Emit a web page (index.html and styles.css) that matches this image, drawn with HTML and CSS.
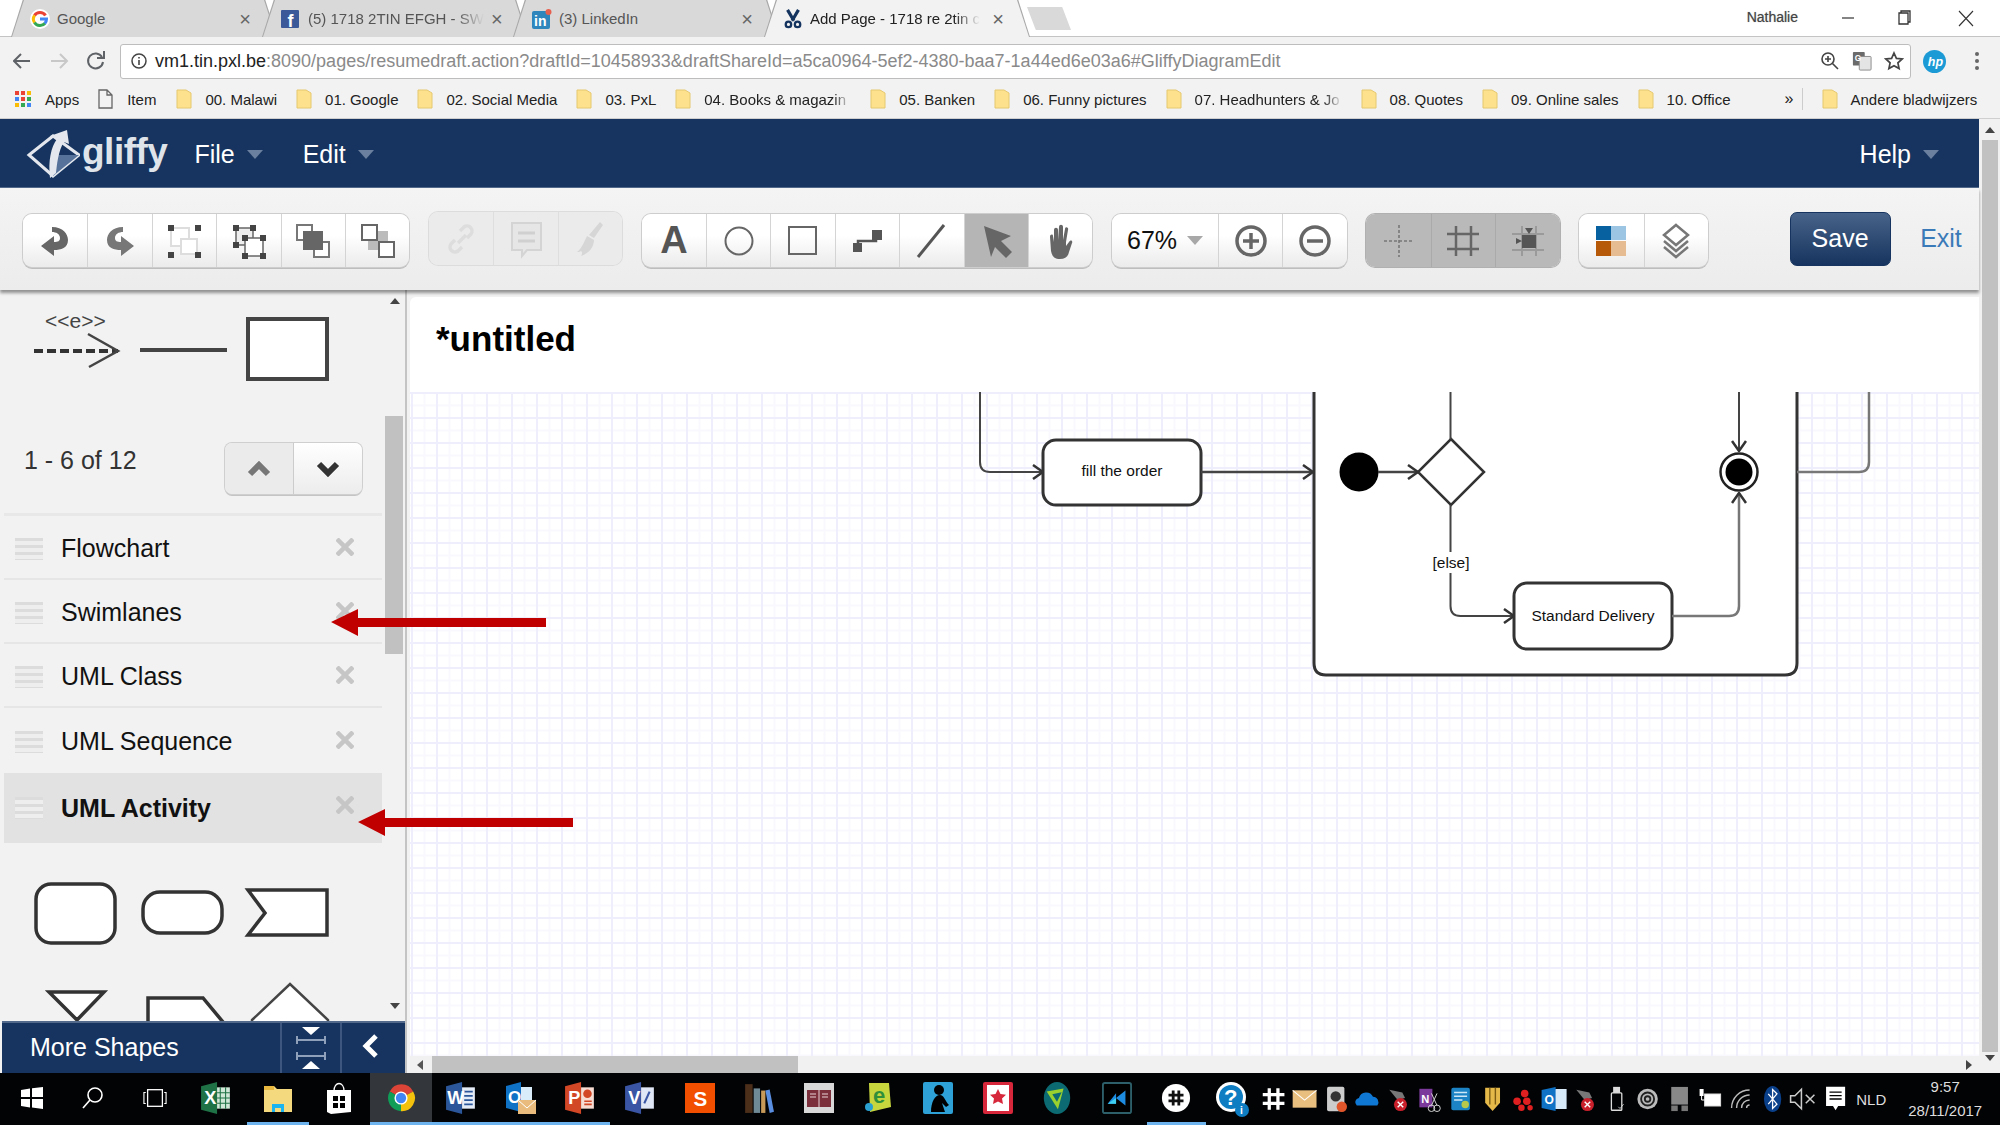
FILE: index.html
```html
<!DOCTYPE html>
<html lang="en">
<head>
<meta charset="utf-8">
<title>Add Page - 1718 re 2tin</title>
<link rel="stylesheet" href="styles.css">
</head>
<body>
<div class="tabstrip">
  <div class="tab">
    <svg class="fav" viewBox="0 0 20 20"><circle cx="10" cy="10" r="10" fill="#fff"/><path d="M15.5 6.5A6.5 6.5 0 0 0 4.5 6.5" fill="none" stroke="#ea4335" stroke-width="3"/><path d="M4.6 6.3A6.500 6.500 0 0 0 4.6 13.700" fill="none" stroke="#fbbc05" stroke-width="3"/><path d="M4.500 13.500A6.500 6.500 0 0 0 15 14.200" fill="none" stroke="#34a853" stroke-width="3"/><path d="M10 10h6.500A6.500 6.500 0 0 1 14.800 14.500" fill="none" stroke="#4285f4" stroke-width="3"/></svg>
    <span class="tab-title">Google</span><span class="tab-x">×</span>
  </div>
  <div class="tab">
    <svg class="fav" viewBox="0 0 20 20"><rect y="1" width="18" height="18" rx="1" fill="#3b5998"/><text x="6.500" y="18" class="fav-f">f</text></svg>
    <span class="tab-title fade">(5) 1718 2TIN EFGH - SW</span><span class="tab-x">×</span>
  </div>
  <div class="tab">
    <svg class="fav" viewBox="0 0 20 20"><rect y="2" width="18" height="18" rx="2" fill="#2f86bd"/><text x="2" y="17" class="fav-in">in</text><circle cx="16.500" cy="3" r="3" fill="#e6604f"/></svg>
    <span class="tab-title">(3) LinkedIn</span><span class="tab-x">×</span>
  </div>
  <div class="tab active">
    <svg class="fav" viewBox="0 0 22 22"><path d="M5 1l7 12M17 1L10 13" stroke="#14335f" stroke-width="3.500" fill="none"/><circle cx="6" cy="17" r="3" fill="none" stroke="#14335f" stroke-width="2.500"/><circle cx="16" cy="17" r="3" fill="none" stroke="#14335f" stroke-width="2.500"/></svg>
    <span class="tab-title fade">Add Page - 1718 re 2tin c</span><span class="tab-x">×</span>
  </div>
  <div class="newtab"></div>
  <span class="user">Nathalie</span>
  <svg class="winctl" viewBox="0 0 150 36"><path d="M0 18h12" stroke="#333" stroke-width="1.200"/><path d="M57 13h9v11h-9zM59 13v-2h9v11h-2" fill="none" stroke="#333" stroke-width="1.300"/><path d="M117 11l14 15M131 11l-14 15" stroke="#333" stroke-width="1.100"/></svg>
</div>

<div class="addressrow">
  <svg class="navbtns" viewBox="0 0 96 28"><path d="M17 14H2M8 7l-7 7 7 7" fill="none" stroke="#5f6368" stroke-width="2"/><path d="M38 14h15M47 7l7 7-7 7" fill="none" stroke="#c8c8c8" stroke-width="2"/><path d="M89 10a7.500 7.500 0 1 0 1 5M91 4v7h-7" fill="none" stroke="#5f6368" stroke-width="2"/></svg>
  <div class="omnibox">
    <svg class="info" viewBox="0 0 18 18"><circle cx="9" cy="9" r="7" fill="none" stroke="#444" stroke-width="1.500"/><path d="M9 8v5M9 5v1.500" stroke="#444" stroke-width="1.600"/></svg>
    <span class="url"><b>vm1.tin.pxl.be</b>:8090/pages/resumedraft.action?draftId=10458933&amp;draftShareId=a5ca0964-5ef2-4380-baa7-1a44ed6e03a6#GliffyDiagramEdit</span>
    <svg class="omni-ic" viewBox="0 0 20 20"><circle cx="8" cy="8" r="6" fill="none" stroke="#444" stroke-width="1.600"/><path d="M12.500 12.500L18 18M8 5v6M5 8h6" stroke="#444" stroke-width="1.600"/></svg>
    <svg class="omni-ic" viewBox="0 0 22 22"><rect x="1" y="1" width="13" height="15" rx="1" fill="#6b6b6b"/><rect x="8" y="6" width="13" height="15" rx="1" fill="#e4e4e4" stroke="#888"/><text x="3" y="11" class="fav-g">G</text></svg>
    <svg class="omni-ic" viewBox="0 0 20 20"><path d="M10 2l2.400 5.400 5.800.6-4.300 3.900 1.200 5.700L10 14.700l-5.100 2.900 1.200-5.700L1.800 8l5.800-.6z" fill="none" stroke="#444" stroke-width="1.700"/></svg>
  </div>
  <svg class="hp" viewBox="0 0 24 24"><circle cx="12" cy="12" r="12" fill="#1b9ad6"/><text x="5" y="17" class="hp-t">hp</text></svg>
  <svg class="dots" viewBox="0 0 4 18"><circle cx="2" cy="2" r="2" fill="#666"/><circle cx="2" cy="9" r="2" fill="#666"/><circle cx="2" cy="16" r="2" fill="#666"/></svg>
</div>

<div class="bookmarks">
  <svg class="apps" viewBox="0 0 17 17"><g><rect width="4" height="4" fill="#ea4335"/><rect x="6" width="4" height="4" fill="#ea4335"/><rect x="12" width="4" height="4" fill="#fbbc05"/><rect y="6" width="4" height="4" fill="#4285f4"/><rect x="6" y="6" width="4" height="4" fill="#ea4335"/><rect x="12" y="6" width="4" height="4" fill="#34a853"/><rect y="12" width="4" height="4" fill="#fbbc05"/><rect x="6" y="12" width="4" height="4" fill="#34a853"/><rect x="12" y="12" width="4" height="4" fill="#4285f4"/></g></svg>
  <span class="bm-label apps-label">Apps</span>
  <svg class="page" viewBox="0 0 15 20"><path d="M1 1h8l5 5v13H1zM9 1v5h5" fill="none" stroke="#666" stroke-width="1.300"/></svg>
  <span class="bm-label item-label">Item</span>
  <div class="bm"><svg class="folder" viewBox="0 0 16 20"><path d="M1 1h9l5 3v15H1z" fill="#fde18d" stroke="#e6c870"/></svg><span class="bm-label">00. Malawi</span></div>
  <div class="bm"><svg class="folder" viewBox="0 0 16 20"><path d="M1 1h9l5 3v15H1z" fill="#fde18d" stroke="#e6c870"/></svg><span class="bm-label">01. Google</span></div>
  <div class="bm"><svg class="folder" viewBox="0 0 16 20"><path d="M1 1h9l5 3v15H1z" fill="#fde18d" stroke="#e6c870"/></svg><span class="bm-label">02. Social Media</span></div>
  <div class="bm"><svg class="folder" viewBox="0 0 16 20"><path d="M1 1h9l5 3v15H1z" fill="#fde18d" stroke="#e6c870"/></svg><span class="bm-label">03. PxL</span></div>
  <div class="bm"><svg class="folder" viewBox="0 0 16 20"><path d="M1 1h9l5 3v15H1z" fill="#fde18d" stroke="#e6c870"/></svg><span class="bm-label long">04. Books &amp; magazin</span></div>
  <div class="bm"><svg class="folder" viewBox="0 0 16 20"><path d="M1 1h9l5 3v15H1z" fill="#fde18d" stroke="#e6c870"/></svg><span class="bm-label">05. Banken</span></div>
  <div class="bm"><svg class="folder" viewBox="0 0 16 20"><path d="M1 1h9l5 3v15H1z" fill="#fde18d" stroke="#e6c870"/></svg><span class="bm-label">06. Funny pictures</span></div>
  <div class="bm"><svg class="folder" viewBox="0 0 16 20"><path d="M1 1h9l5 3v15H1z" fill="#fde18d" stroke="#e6c870"/></svg><span class="bm-label long">07. Headhunters &amp; Jo</span></div>
  <div class="bm"><svg class="folder" viewBox="0 0 16 20"><path d="M1 1h9l5 3v15H1z" fill="#fde18d" stroke="#e6c870"/></svg><span class="bm-label">08. Quotes</span></div>
  <div class="bm"><svg class="folder" viewBox="0 0 16 20"><path d="M1 1h9l5 3v15H1z" fill="#fde18d" stroke="#e6c870"/></svg><span class="bm-label">09. Online sales</span></div>
  <div class="bm"><svg class="folder" viewBox="0 0 16 20"><path d="M1 1h9l5 3v15H1z" fill="#fde18d" stroke="#e6c870"/></svg><span class="bm-label">10. Office</span></div>
  <span class="bm-more">»</span>
  <div class="bm bm-other"><svg class="folder" viewBox="0 0 16 20"><path d="M1 1h9l5 3v15H1z" fill="#fde18d" stroke="#e6c870"/></svg><span class="bm-label">Andere bladwijzers</span></div>
</div>

<div class="app">
  <div class="app-main">
    <header class="nav">
      <svg class="logo-mark" viewBox="0 0 60 60"><path d="M9 32L33 13 59 32 33 53z" fill="none" stroke="#e4e8ee" stroke-width="3"/><path d="M35 32l24 0-26 21z" fill="#56719a"/><path d="M30 55C28 38 31 24 37 16L30 13 47 7 49 21 44 19C38 28 37 42 36 50z" fill="#e4e8ee"/></svg>
      <span class="logo-text">gliffy</span>
      <span class="menu menu-file">File<i class="caret"></i></span>
      <span class="menu menu-edit">Edit<i class="caret"></i></span>
      <span class="menu menu-help">Help<i class="caret"></i></span>
    </header>

    <div class="toolbar">
      <div class="group">
        <button class="tb"><svg viewBox="0 0 40 40"><path d="M6 25l13-10v20zM17 6c11 0 16 7 16 13 0 8-7 10-14 10v-8c4 0 6-1 6-4 0-4-4-6-8-6z" fill="#666"/></svg></button>
        <button class="tb"><svg viewBox="0 0 40 40"><path d="M34 25L21 15v20zM23 6C12 6 7 13 7 19c0 8 7 10 14 10v-8c-4 0-6-1-6-4 0-4 4-6 8-6z" fill="#777"/></svg></button>
        <button class="tb"><svg viewBox="0 0 40 40"><rect x="7" y="7" width="18" height="18" fill="#fff" stroke="#ddd" stroke-width="2"/><rect x="17" y="18" width="16" height="15" fill="#fff" stroke="#ddd" stroke-width="2"/><path d="M4 4h6v6H4zM31 4h6v6h-6zM4 31h6v6H4zM31 31h6v6h-6z" fill="#444"/></svg></button>
        <button class="tb"><svg viewBox="0 0 40 40"><path d="M7 7h17v17H7z" fill="#eee" stroke="#666" stroke-width="1.500"/><rect x="16" y="17" width="18" height="18" fill="#fff" stroke="#666" stroke-width="1.500"/><path d="M4 4h6v6H4zM21 4h6v6h-6zM4 21h6v6H4zM13 14h6v6h-6zM31 14h6v6h-6zM13 32h6v6h-6zM31 32h6v6h-6z" fill="#444"/></svg></button>
        <button class="tb"><svg viewBox="0 0 40 40"><rect x="4" y="4" width="15" height="15" fill="#fff" stroke="#777" stroke-width="2"/><rect x="21" y="21" width="15" height="15" fill="#fff" stroke="#777" stroke-width="2"/><rect x="10" y="10" width="20" height="19" fill="#666"/></svg></button>
        <button class="tb"><svg viewBox="0 0 40 40"><rect x="10" y="10" width="20" height="19" fill="#bbb"/><rect x="4" y="4" width="15" height="15" fill="#fff" stroke="#666" stroke-width="2"/><rect x="21" y="21" width="15" height="15" fill="#fff" stroke="#666" stroke-width="2"/></svg></button>
      </div>
      <div class="group disabled">
        <button class="tb"><svg viewBox="0 0 40 40"><path d="M17 24l8-8M14 21l-4 4a5 5 0 0 0 7 7l4-4M26 19l4-4a5 5 0 0 0-7-7l-4 4" fill="none" stroke="#ddd" stroke-width="3.500"/></svg></button>
        <button class="tb"><svg viewBox="0 0 40 40"><path d="M6 4h29v27H21l-5 6v-6H6z" fill="#e6e6e6" stroke="#d4d4d4" stroke-width="2"/><path d="M12 14h17M12 22h17" stroke="#d0d0d0" stroke-width="3"/></svg></button>
        <button class="tb"><svg viewBox="0 0 40 40"><path d="M30 3l3 3-9 13-5-3zM17 17l7 4c0 6-4 13-13 16 2-3 1-4 0-5-1 1-3 1-4 1 5-4 7-10 10-16z" fill="#d6d6d6"/></svg></button>
      </div>
      <div class="group">
        <button class="tb"><span class="tool-a">A</span></button>
        <button class="tb"><svg viewBox="0 0 40 40"><ellipse cx="20" cy="20" rx="13.500" ry="13.500" fill="none" stroke="#666" stroke-width="2"/></svg></button>
        <button class="tb"><svg viewBox="0 0 40 40"><rect x="6" y="6" width="27" height="27" fill="none" stroke="#666" stroke-width="2"/></svg></button>
        <button class="tb"><svg viewBox="0 0 40 40"><path d="M10 27V20H28V12" fill="none" stroke="#555" stroke-width="2.500"/><rect x="5" y="22" width="9" height="9" fill="#555"/><rect x="24" y="9" width="10" height="10" fill="#555"/></svg></button>
        <button class="tb"><svg viewBox="0 0 40 40"><path d="M6 36L32 4" stroke="#555" stroke-width="3"/></svg></button>
        <button class="tb on"><svg viewBox="0 0 40 40"><path d="M8 5l27 10-10 5 11 11-6 6-11-11-4 10z" fill="#666"/></svg></button>
        <button class="tb"><svg viewBox="0 0 40 40"><path d="M9 16c0-3 3-3 3-1l1 6V9c0-3 4-3 4 0v10l1-13c0-3 4-3 4 0l0 13 2-11c0-3 4-2 3 1l-2 12 0 4 3-4c2-3 4-1 3 1l-3 9c-1 5-4 7-9 7-6 0-8-3-9-8z" fill="#666"/></svg></button>
      </div>
      <div class="group">
        <button class="tb tb-zoom">67%<i class="caret caret-zoom"></i></button>
        <button class="tb"><svg viewBox="0 0 40 40"><circle cx="20" cy="20" r="14" fill="none" stroke="#666" stroke-width="3.500"/><path d="M20 12v16M12 20h16" stroke="#666" stroke-width="3.500"/></svg></button>
        <button class="tb"><svg viewBox="0 0 40 40"><circle cx="20" cy="20" r="14" fill="none" stroke="#666" stroke-width="3.500"/><path d="M12 20h16" stroke="#666" stroke-width="3.500"/></svg></button>
      </div>
      <div class="group pressed">
        <button class="tb"><svg viewBox="0 0 40 40"><path d="M20 4v32M5 20h30" stroke="#777" stroke-width="1.600" stroke-dasharray="3 2"/></svg></button>
        <button class="tb"><svg viewBox="0 0 40 40"><path d="M13 5v30M28 5v30M4 13h32M4 28h32" stroke="#666" stroke-width="2.500"/></svg></button>
        <button class="tb"><svg viewBox="0 0 40 40"><path d="M14 5v30M28 5v30M4 13h32M4 29h32" stroke="#9a9a9a" stroke-width="2"/><path d="M14 14h14v13H14zM8 17l6 3-6 3zM17 7h8l-4 6z" fill="#555"/></svg></button>
      </div>
      <div class="group">
        <button class="tb"><svg viewBox="0 0 40 40"><rect x="5" y="5" width="15" height="14" fill="#07609f"/><rect x="20" y="5" width="15" height="14" fill="#9cc5e3"/><rect x="5" y="20" width="15" height="15" fill="#b65a0a"/><rect x="20" y="20" width="15" height="15" fill="#e6bd93"/></svg></button>
        <button class="tb"><svg viewBox="0 0 40 40"><path d="M20 4l12 10-12 10L8 14z" fill="#fff" stroke="#777" stroke-width="2.500"/><path d="M8 20l12 10 12-10M8 26l12 10 12-10" fill="none" stroke="#777" stroke-width="2.500"/></svg></button>
      </div>
      <button class="save">Save</button>
      <a class="exit">Exit</a>
    </div>

    <div class="workspace">
      <aside class="sidebar">
        <div class="sidebar-body">
          <div class="sidebar-scrollarea">
            <svg class="preview" viewBox="0 0 310 64"><text x="11" y="11" class="preview-text">&lt;&lt;e&gt;&gt;</text><path d="M0 34H84" stroke="#333" stroke-width="4" stroke-dasharray="9 4"/><path d="M54 17l30 17-29 16" fill="none" stroke="#444" stroke-width="2.500"/><path d="M106 33h87" stroke="#444" stroke-width="4"/><rect x="214" y="2" width="79" height="60" fill="#fff" stroke="#444" stroke-width="4"/></svg>
            <div class="pager">
              <span class="pager-label">1 - 6 of 12</span>
              <div class="pager-btns">
                <button class="pg pg-off"><svg viewBox="0 0 24 16"><path d="M3 13l9-9 9 9" fill="none" stroke="#777" stroke-width="6"/></svg></button>
                <button class="pg"><svg viewBox="0 0 24 16"><path d="M3 3l9 9 9-9" fill="none" stroke="#333" stroke-width="6"/></svg></button>
              </div>
            </div>
            <ul class="stencils">
              <li class="stencil"><i class="handle"></i><span class="stencil-name">Flowchart</span><svg class="rm" viewBox="0 0 18 18"><path d="M1 1l16 16M17 1L1 17" stroke="#c6c6c6" stroke-width="4.500"/></svg></li>
              <li class="stencil"><i class="handle"></i><span class="stencil-name">Swimlanes</span><svg class="rm" viewBox="0 0 18 18"><path d="M1 1l16 16M17 1L1 17" stroke="#c6c6c6" stroke-width="4.500"/></svg></li>
              <li class="stencil"><i class="handle"></i><span class="stencil-name">UML Class</span><svg class="rm" viewBox="0 0 18 18"><path d="M1 1l16 16M17 1L1 17" stroke="#c6c6c6" stroke-width="4.500"/></svg></li>
              <li class="stencil stencil-plain"><i class="handle"></i><span class="stencil-name">UML Sequence</span><svg class="rm" viewBox="0 0 18 18"><path d="M1 1l16 16M17 1L1 17" stroke="#c6c6c6" stroke-width="4.500"/></svg></li>
              <li class="stencil stencil-active"><i class="handle"></i><span class="stencil-name">UML Activity</span><svg class="rm" viewBox="0 0 18 18"><path d="M1 1l16 16M17 1L1 17" stroke="#c6c6c6" stroke-width="4.500"/></svg></li>
            </ul>
            <svg class="shapes" viewBox="0 0 310 150"><rect x="2" y="2" width="79" height="59" rx="15" fill="#fff" stroke="#333" stroke-width="3.500"/><rect x="109" y="10" width="79" height="41" rx="17" fill="#fff" stroke="#333" stroke-width="3.500"/><path d="M214 8h79v45h-79l17-22z" fill="#fff" stroke="#333" stroke-width="3.500"/><path d="M15 110h55l-27 28z" fill="#fff" stroke="#333" stroke-width="3.500"/><path d="M114 116h55l20 24v30h-75z" fill="#fff" stroke="#333" stroke-width="3.500"/><path d="M218 138l38-36 38 36v40h-76z" fill="#fff" stroke="#444" stroke-width="2.500"/></svg>
          </div>
          <div class="side-scroll">
            <i class="arrow-up"></i>
            <div class="side-track"><div class="side-thumb"></div></div>
            <i class="arrow-down"></i>
          </div>
        </div>
        <div class="more">
          <span class="more-label">More Shapes</span>
          <div class="more-btn"><svg viewBox="0 0 30 44"><path d="M6 1h18l-9 8zM6 43h18l-9-8z" fill="#fff"/><path d="M1 10v8M29 10v8M1 14h28M1 30h28M1 26v8M29 26v8" stroke="#8ea0ba" stroke-width="2" fill="none"/></svg></div>
          <div class="more-btn"><svg viewBox="0 0 18 24"><path d="M14 2L4 12l10 10" fill="none" stroke="#fff" stroke-width="5"/></svg></div>
        </div>
      </aside>

      <main class="canvas">
        <h1 class="doc-title">*untitled</h1>
        <div class="grid">
          <svg class="diagram" viewBox="410 392 1569 664">
            <defs><marker id="ah" viewBox="0 0 12 16" refX="11" refY="8" markerWidth="12" markerHeight="16" markerUnits="userSpaceOnUse" orient="auto"><path d="M1 1l10 7-10 7" fill="none" stroke="#333" stroke-width="2.500"/></marker></defs>
            <path d="M980 392v70q0 10 10 10h53" class="wire" marker-end="url(#ah)"/>
            <rect x="1043" y="440" width="158" height="65" rx="13" class="node"/>
            <text x="1122" y="476" class="label" text-anchor="middle">fill the order</text>
            <path d="M1201 472h112" class="wire thick" marker-end="url(#ah)"/>
            <path d="M1314 380V663q0 12 12 12H1785q12 0 12-12V380" class="frame"/>
            <circle cx="1359" cy="472" r="19.500" fill="#000"/>
            <path d="M1378 472h40" class="wire thick" marker-end="url(#ah)"/>
            <path d="M1451 439l33 33-33 33-33-33z" class="diamond"/>
            <path d="M1450.500 392v47" class="wire"/>
            <path d="M1450.500 505V606q0 10 10 10H1514" class="wire" marker-end="url(#ah)"/>
            <rect x="1429" y="552" width="44" height="21" fill="#fff"/>
            <text x="1451" y="568" class="label" text-anchor="middle">[else]</text>
            <rect x="1514" y="583" width="158" height="66" rx="13" class="node"/>
            <text x="1593" y="621" class="label" text-anchor="middle">Standard Delivery</text>
            <path d="M1672 616h57q10 0 10-10V493" class="wire thick grey" marker-end="url(#ah)"/>
            <path d="M1739 392v59" class="wire" marker-end="url(#ah)"/>
            <circle cx="1739" cy="472" r="18.500" fill="#fff" stroke="#222" stroke-width="2.500"/>
            <circle cx="1739" cy="472" r="13.500" fill="#000"/>
            <path d="M1797 472h62q10 0 10-10V392" class="wire thick grey"/>
          </svg>
        </div>
        <div class="hscroll">
          <i class="arrow-left"></i>
          <div class="hthumb"></div>
          <i class="arrow-right"></i>
        </div>
      </main>
    </div>
  </div>
  <div class="pagescroll">
    <i class="arrow-up"></i>
    <div class="page-thumb"></div>
    <i class="arrow-down"></i>
  </div>
</div>

<footer class="taskbar">
  <div class="task"><svg viewBox="0 0 24 24"><path d="M1 4l9-1.500V11H1zM12 2.200L23 1v10H12zM1 13h9v8.500L1 20zM12 13h11v10l-11-1.500z" fill="#fff"/></svg></div>
  <div class="task"><svg viewBox="0 0 24 24"><circle cx="14" cy="9" r="7" fill="none" stroke="#fff" stroke-width="1.600"/><path d="M9 14l-7 8" stroke="#fff" stroke-width="1.600"/></svg></div>
  <div class="task"><svg viewBox="0 0 26 24"><rect x="5" y="3" width="16" height="18" fill="none" stroke="#fff" stroke-width="1.400"/><path d="M3 6H1v12h2M23 6h2v12h-2" fill="none" stroke="#fff" stroke-width="1.200"/></svg></div>
  <div class="task"><svg viewBox="0 0 28 30"><path d="M0 4l15-4v30L0 26z" fill="#1f7246"/><rect x="15" y="5" width="12" height="20" fill="#cfe8d8"/><path d="M18 5v20M23 5v20M15 10h12M15 15h12M15 20h12" stroke="#1f7246"/><text x="3" y="21" class="tk-l">X</text></svg></div>
  <div class="task"><svg viewBox="0 0 30 30"><path d="M1 3h10l3 3h15v23H1z" fill="#f5d97e"/><path d="M1 3h10v4H1z" fill="#e8b93e"/><path d="M9 21h12v8h-3v-4h-6v4H9z" fill="#1bb3f0"/></svg></div>
  <div class="task"><svg viewBox="0 0 26 32"><path d="M8 9c0-10 10-10 10 0" fill="none" stroke="#fff" stroke-width="1.300"/><path d="M1 8h24v22l-20 2-4-2z" fill="#fff"/><path d="M7 14h5v5H7zM14 14h5v5h-5zM7 21h5v5H7zM14 21h5v5h-5z" fill="#000"/></svg></div>
  <div class="task task-on"><svg viewBox="0 0 32 32"><path d="M16 16L4 9A14 14 0 0 1 29 9z" fill="#db4437"/><path d="M16 16L29 9A14 14 0 0 1 16 30z" fill="#f4c20d"/><path d="M16 16L16 30A14 14 0 0 1 4 9z" fill="#0f9d58"/><circle cx="16" cy="16" r="7" fill="#fff"/><circle cx="16" cy="16" r="5.500" fill="#4285f4"/></svg></div>
  <div class="task"><svg viewBox="0 0 28 30"><path d="M0 4l15-4v30L0 26z" fill="#2b579a"/><rect x="15" y="5" width="12" height="20" fill="#e4ecf7"/><path d="M17 9h8M17 13h8M17 17h8M17 21h8" stroke="#2b579a" stroke-width="1.500"/><text x="1" y="21" class="tk-l">W</text></svg></div>
  <div class="task"><svg viewBox="0 0 30 32"><path d="M0 4l15-4v30L0 26z" fill="#0f72c4"/><rect x="15" y="5" width="11" height="15" fill="#d9ecfa"/><text x="2" y="21" class="tk-l">O</text><rect x="12" y="18" width="18" height="14" fill="#e9bc7d"/><path d="M12 18l9 8 9-8" fill="none" stroke="#fff"/></svg></div>
  <div class="task"><svg viewBox="0 0 28 30"><path d="M0 4l15-4v30L0 26z" fill="#d24726"/><rect x="15" y="5" width="12" height="20" fill="#f6dcd3"/><path d="M18 18h7M18 21h7" stroke="#d24726" stroke-width="1.500"/><circle cx="21" cy="11" r="4" fill="#d24726"/><text x="3" y="21" class="tk-l">P</text></svg></div>
  <div class="task"><svg viewBox="0 0 28 30"><path d="M0 4l15-4v30L0 26z" fill="#3955a3"/><rect x="15" y="5" width="12" height="20" fill="#dfe6f5"/><path d="M18 20l5-11" stroke="#3955a3" stroke-width="2"/><text x="3" y="21" class="tk-l">V</text></svg></div>
  <div class="task"><svg viewBox="0 0 32 32"><rect width="32" height="32" fill="#f25000"/><text x="9" y="24" class="tk-s">S</text></svg></div>
  <div class="task"><svg viewBox="0 0 28 30"><path d="M1 2h7v27H1z" fill="#4c2f1a"/><path d="M9 6h6v23H9z" fill="#6f8a95"/><path d="M16 8h4v21h-4z" fill="#c89a5a"/><path d="M20 8l4-1 4 21-4 1z" fill="#5a8ee0"/></svg></div>
  <div class="task"><svg viewBox="0 0 30 30"><rect width="30" height="30" fill="#d8d8d8"/><rect x="3" y="7" width="24" height="17" fill="#7a2f3a"/><path d="M15 7v17M6 11h6M6 14h6M18 11h6M18 14h6" stroke="#e8d3d6"/></svg></div>
  <div class="task"><svg viewBox="0 0 28 32"><path d="M5 1h20l2 24-21 5z" fill="#c8d63e"/><text x="9" y="21" class="tk-e">e</text><circle cx="5" cy="25" r="4" fill="#2aa0d0"/></svg></div>
  <div class="task"><svg viewBox="0 0 30 32"><rect width="30" height="32" rx="2" fill="#2ea2d6"/><circle cx="16" cy="8" r="5" fill="#000"/><path d="M8 30c0-10 4-17 9-17 4 0 5 6 9 10l-3 2-4-4 3 9z" fill="#000"/></svg></div>
  <div class="task"><svg viewBox="0 0 30 32"><rect width="30" height="32" rx="2" fill="#d6273b"/><rect x="4" y="3" width="22" height="26" fill="#fff"/><path d="M15 7l2.500 5 5.500.8-4 3.800 1 5.400-5-2.600-5 2.600 1-5.400-4-3.800 5.500-.8z" fill="#d6273b"/></svg></div>
  <div class="task"><svg viewBox="0 0 30 34"><ellipse cx="15" cy="17" rx="14" ry="17" fill="#0b6a72"/><path d="M4 10l18-3-6 22z" fill="#9ad12f"/><path d="M10 13l10-2-5 10z" fill="#0b6a72"/></svg></div>
  <div class="task"><svg viewBox="0 0 32 34"><rect x="1" y="1" width="30" height="32" rx="2" fill="#000" stroke="#2c5f69" stroke-width="2"/><path d="M6 23l9-11v11zM15 17l10-8v16z" fill="#1d8ce0"/><path d="M6 23l9-6v6z" fill="#3fd0f0"/></svg></div>
  <div class="task task-on"><svg viewBox="0 0 32 32"><circle cx="16" cy="16" r="15" fill="#fff"/><path d="M13 8v16M19 8v16M8 13h16M8 19h16" stroke="#111" stroke-width="3"/></svg></div>
  <div class="tray-help"><svg viewBox="0 0 34 40"><circle cx="16" cy="18" r="15" fill="#fff"/><circle cx="16" cy="18" r="12" fill="#0e7dc2"/><text x="9" y="26" class="tk-q">?</text><circle cx="27" cy="31" r="7" fill="#0e7dc2"/><text x="25" y="35" class="tk-i">i</text></svg></div>
  <div class="tray">
    <svg viewBox="0 0 24 24"><path d="M8 2v20M16 2v20M2 8h20M2 16h20" stroke="#fff" stroke-width="3"/></svg>
    <svg viewBox="0 0 24 24"><rect x="1" y="4" width="22" height="16" fill="#e9bf7f"/><path d="M1 4l11 9 11-9" fill="none" stroke="#fff"/></svg>
    <svg viewBox="0 0 24 30"><rect x="1" y="1" width="20" height="28" rx="2" fill="#ccc"/><circle cx="11" cy="12" r="6" fill="#333"/><circle cx="18" cy="24" r="6" fill="#e0562a"/></svg>
    <svg viewBox="0 0 24 24"><path d="M2 18a4 4 0 0 1 2-7 7 7 0 0 1 13-1 5 5 0 0 1 4 8z" fill="#0f78d4"/></svg>
    <svg viewBox="0 0 24 28"><path d="M2 4l14 3 3 6-8 2z" fill="#777"/><circle cx="14" cy="20" r="7" fill="#c9202c"/><path d="M11 17l6 6M17 17l-6 6" stroke="#fff" stroke-width="1.500"/></svg>
    <svg viewBox="0 0 24 28"><rect x="1" y="3" width="14" height="20" fill="#7b3a9b"/><text x="3" y="18" class="tk-t">N</text><circle cx="14" cy="24" r="3.500" fill="none" stroke="#ddd"/><circle cx="20" cy="24" r="3.500" fill="none" stroke="#ddd"/><path d="M14 21L20 8M20 21L14 8" stroke="#ddd"/></svg>
    <svg viewBox="0 0 24 28"><rect x="2" y="2" width="20" height="24" rx="2" fill="#1c84c4"/><path d="M5 7h14M5 11h14M5 15h9" stroke="#cfe8f7" stroke-width="1.500"/><circle cx="17" cy="20" r="4" fill="#b9c84a"/></svg>
    <svg viewBox="0 0 20 28"><path d="M2 2h16v16l-8 9-8-9z" fill="#e5b84a"/><path d="M7 2v18M13 2v18" stroke="#7a5c12" stroke-width="1.500"/></svg>
    <svg viewBox="0 0 24 24"><circle cx="13" cy="7" r="3.500" fill="#e02020"/><circle cx="6" cy="14" r="3.500" fill="#e02020"/><circle cx="15" cy="14" r="3.500" fill="#e02020"/><circle cx="10" cy="20" r="3" fill="#e02020"/><circle cx="18" cy="20" r="2.500" fill="#e02020"/></svg>
    <svg viewBox="0 0 26 26"><rect x="7" y="3" width="18" height="20" fill="#d7eafa"/><path d="M0 4l14-3v24L0 22z" fill="#0f72c4"/><text x="3" y="18" class="tk-t">O</text></svg>
    <svg viewBox="0 0 24 28"><path d="M2 4l14 3 3 6-8 2z" fill="#777"/><circle cx="14" cy="20" r="7" fill="#c9202c"/><path d="M11 17l6 6M17 17l-6 6" stroke="#fff" stroke-width="1.500"/></svg>
    <svg viewBox="0 0 20 30"><rect x="6" y="1" width="8" height="7" fill="#ddd"/><rect x="4" y="8" width="12" height="20" rx="1" fill="none" stroke="#ddd" stroke-width="1.500"/><path d="M12 24l2 2 4-5" fill="none" stroke="#ddd"/></svg>
    <svg viewBox="0 0 24 28"><circle cx="12" cy="14" r="11" fill="#bbb"/><circle cx="12" cy="14" r="7" fill="none" stroke="#222" stroke-width="2"/><circle cx="12" cy="14" r="3" fill="none" stroke="#222" stroke-width="2"/></svg>
    <svg viewBox="0 0 22 28"><rect x="2" y="1" width="18" height="19" fill="#888"/><rect x="2" y="21" width="7" height="6" fill="#777"/><rect x="13" y="21" width="7" height="6" fill="#777"/></svg>
    <svg viewBox="0 0 26 26"><rect x="7" y="8" width="16" height="12" fill="#fff" stroke="#ddd"/><rect x="2" y="3" width="4" height="7" fill="#fff"/><path d="M4 10v4h3" stroke="#fff" fill="none"/></svg>
    <svg viewBox="0 0 26 26"><path d="M3 22a18 18 0 0 1 18-18M8 22a13 13 0 0 1 13-13M13 22a8 8 0 0 1 8-8M18 22a3 3 0 0 1 3-3" fill="none" stroke="#bbb" stroke-width="1.400"/></svg>
    <svg viewBox="0 0 20 30"><ellipse cx="10" cy="15" rx="10" ry="15" fill="#0a3f8a"/><path d="M5 9l10 12-5 5V4l5 5-10 12" fill="none" stroke="#fff" stroke-width="1.500"/></svg>
    <svg viewBox="0 0 26 24"><path d="M1 9h4l6-6v18l-6-6H1z" fill="none" stroke="#ccc" stroke-width="1.400"/><path d="M15 8l8 8M23 8l-8 8" stroke="#ccc" stroke-width="1.400"/></svg>
    <svg viewBox="0 0 24 30"><path d="M1 1h22v22h-8l-3 5-3-5H1z" fill="#fff"/><path d="M5 7h14M5 11h14M5 15h14" stroke="#000" stroke-width="1.500"/></svg>
  </div>
  <span class="lang">NLD</span>
  <div class="clock"><span>9:57</span><span>28/11/2017</span></div>
</footer>

<svg class="callouts" viewBox="0 0 600 900"><path d="M331 622l27-13v9h188v9H358v9z" fill="#c00000"/><path d="M358 822l27-13v9h188v9H385v9z" fill="#c00000"/></svg>
</body>
</html>
```
FILE: styles.css
```css
* { box-sizing: border-box; }
html, body { margin: 0; height: 100%; }
body {
  width: 2000px; height: 1125px; overflow: hidden; position: relative;
  display: flex; flex-direction: column;
  font-family: "Liberation Sans", Arial, sans-serif; color: #111; background: #fff;
}
button { font: inherit; color: inherit; padding: 0; }
ul { list-style: none; margin: 0; padding: 0; }
i { display: block; font-style: normal; }

/* Tab strip */
.tabstrip {
  height: 37px; flex: none; display: flex; align-items: flex-end; padding-left: 11px;
  border-bottom: 1px solid #c4c4c4; position: relative; background: #fff;
}
.tab {
  width: 266px; height: 37px; margin-right: -15px; padding: 2px 26px 0 19px; flex: none;
  display: flex; align-items: center; gap: 7px; position: relative; font-size: 15px; color: #555;
}
.tab::before, .tab::after { content: ""; position: absolute; top: 0; bottom: -1px; clip-path: polygon(0 100%, 12px 0, calc(100% - 12px) 0, 100% 100%); }
.tab::before { left: 0; right: 0; background: #a8a8a8; }
.tab::after { left: 1px; right: 1px; top: 1px; background: #d9d9d9; }
.tab > * { position: relative; z-index: 1; }
.tab.active { color: #222; z-index: 2; }
.tab.active::after { background: #f2f2f2; }
.fav { width: 20px; height: 20px; flex: none; overflow: visible; }
.fav-f { font: bold 18px "Liberation Sans", sans-serif; fill: #fff; }
.fav-in { font: bold 14px "Liberation Sans", sans-serif; fill: #fff; }
.fav-g { font: bold 9px "Liberation Sans", sans-serif; fill: #fff; }
.tab-title { flex: none; white-space: nowrap; }
.tab-title.fade { -webkit-mask-image: linear-gradient(90deg, #000 85%, transparent 100%); mask-image: linear-gradient(90deg, #000 85%, transparent 100%); }
.tab-x { font-size: 20px; line-height: 20px; color: #666; flex: none; margin-left: auto; }
.newtab { width: 44px; height: 23px; margin: 0 0 6px 12px; flex: none; background: #d9d9d9; clip-path: polygon(0 0, 80% 0, 100% 100%, 20% 100%); }
.user { margin-left: auto; align-self: flex-start; margin-top: 9px; font-size: 14px; color: #444; text-shadow: 0 0 1px #999; }
.winctl { width: 150px; height: 36px; flex: none; align-self: flex-start; margin: 0 8px 0 44px; }

/* Address row */
.addressrow {
  height: 48px; flex: none; display: flex; align-items: center; background: #f2f2f2; padding-left: 13px;
}
.navbtns { width: 96px; height: 28px; flex: none; margin-right: 11px; }
.omnibox {
  width: 1791px; height: 35px; flex: none; display: flex; align-items: center; background: #fff;
  border: 1px solid #bdbdbd; border-radius: 3px; padding: 0 6px 0 9px;
}
.info { width: 18px; height: 18px; flex: none; margin-right: 7px; }
.url { flex: 1; font-size: 18px; color: #8a8a8a; white-space: nowrap; }
.url b { font-weight: normal; color: #222; }
.omni-ic { width: 20px; height: 20px; flex: none; margin-left: 12px; }
.hp { width: 23px; height: 23px; flex: none; margin-left: 12px; }
.hp-t { font: italic bold 13px "Liberation Sans", sans-serif; fill: #fff; }
.dots { width: 4px; height: 18px; flex: none; margin-left: 29px; }

/* Bookmarks */
.bookmarks {
  height: 33px; flex: none; display: flex; align-items: center; background: #f2f2f2;
  padding: 0 0 5px 15px; font-size: 15px; color: #222;
}
.apps { width: 17px; height: 17px; flex: none; margin-right: 13px; }
.page { width: 15px; height: 20px; flex: none; margin: 0 14px 0 19px; }
.bm { display: flex; align-items: center; gap: 13px; margin-right: 19px; flex: none; }
.folder { width: 16px; height: 20px; flex: none; }
.item-label { margin-right: 20px; }
.bm-label { white-space: nowrap; }
.bm-label.long { min-width: 147px; -webkit-mask-image: linear-gradient(90deg, #000 88%, transparent 100%); mask-image: linear-gradient(90deg, #000 88%, transparent 100%); }
.bm-more { margin-left: 35px; width: 19px; border-right: 1px solid #ccc; height: 22px; line-height: 22px; flex: none; font-size: 16px; }
.bm-other { margin: 0 0 0 19px; gap: 12px; }

/* App */
.app { height: 955px; flex: none; display: flex; border-top: 1px solid #cfcfcf; }
.app-main { width: 1979px; flex: none; display: flex; flex-direction: column; }
.nav {
  height: 69px; flex: none; background: #16345f; color: #fff; display: flex; align-items: center;
  border-bottom: 1px solid #52698c; padding: 2px 0 0 20px; position: relative;
}
.logo-mark { width: 60px; height: 60px; flex: none; margin-top: -2px; }
.logo-text { font-size: 37px; font-weight: bold; color: #dfe3ea; margin: -5px 0 0 2px; letter-spacing: -.5px; }
.menu { font-size: 25px; display: flex; align-items: center; gap: 12px; }
.menu-file { margin-left: 27px; }
.menu-edit { margin-left: 40px; }
.menu-help { margin-left: auto; margin-right: 40px; }
.caret { width: 0; height: 0; border: 8px solid transparent; border-top: 9px solid #6b7f9e; border-bottom: 0; }
.caret-zoom { border-top-color: #a8a8a8; }

.toolbar {
  height: 102px; flex: none; display: flex; align-items: center; padding: 3px 17px 0 23px; gap: 19.600px;
  background: linear-gradient(#f4f4f4, #ececec); box-shadow: 0 3px 3px rgba(0,0,0,.4); position: relative; z-index: 3;
}
.group { display: flex; flex: none; height: 53px; border-radius: 9px; box-shadow: 0 0 0 1px #cdcdcd, 0 2px 0 #bdbdbd; overflow: hidden; }
.tb {
  width: 64.400px; height: 53px; border: 0; border-left: 1px solid #d4d4d4; flex: none;
  background: linear-gradient(#fff 40%, #ebebeb); display: flex; align-items: center; justify-content: center;
}
.tb:first-child { border-left: 0; }
.tb svg { width: 40px; height: 40px; }
.tb.on { background: #b5b5b5; }
.disabled { margin-top: -4px; box-shadow: 0 0 0 1px #dcdcdc; }
.disabled .tb { background: #ebebeb; border-left-color: #dedede; }
.pressed { box-shadow: 0 0 0 1px #b0b0b0; }
.pressed .tb { background: #b9b9b9; border-left-color: #aaa; }
.tool-a { font-size: 38px; font-weight: bold; color: #555; }
.tb-zoom { width: 106px; font-size: 25px; gap: 10px; }
.save {
  margin-left: 62px; width: 101px; height: 54px; flex: none; margin-top: -4px; border: 1px solid #16345f; border-radius: 7px;
  background: linear-gradient(#486389, #16345f); color: #fff; font-size: 25px; text-align: center;
}
.exit { margin-left: 10px; font-size: 25px; color: #3a7ab8; margin-top: -4px; }

.workspace { height: 783px; flex: none; display: flex; background: #f2f2f2; }
.sidebar { width: 407px; flex: none; display: flex; flex-direction: column; border-right: 2px solid #c4c4c4; }
.sidebar-body { height: 731px; flex: none; display: flex; overflow: hidden; }
.sidebar-scrollarea { width: 385px; flex: none; overflow: hidden; }
.preview { display: block; width: 310px; height: 64px; margin: 27px 0 0 34px; overflow: visible; }
.preview-text { font: 21px "Liberation Sans", sans-serif; fill: #444; }
.pager { display: flex; align-items: center; margin-top: 62px; padding-left: 24px; }
.pager-label { font-size: 25px; color: #333; margin: -17px 0 0; width: 201px; }
.pager-btns { display: flex; width: 137px; height: 51px; border-radius: 7px; overflow: hidden; box-shadow: 0 0 0 1px #cfcfcf, 0 2px 0 #c4c4c4; }
.pg { flex: 1; border: 0; background: linear-gradient(#fff, #ececec); display: flex; align-items: center; justify-content: center; }
.pg + .pg { border-left: 1px solid #ccc; }
.pg-off { background: #ebebeb; }
.pg svg { width: 24px; height: 16px; }
.stencils { margin: 19px 0 0 4px; width: 378px; border-top: 3px solid #e8e8e8; }
.stencil { height: 64px; display: flex; align-items: center; padding: 3px 28px 0 11px; border-bottom: 2px solid #e6e6e6; font-size: 25px; }
.stencil-plain { border-bottom: 0; }
.stencil-active { height: 70px; margin-top: 1px; padding-top: 0; background: #e2e2e2; border-bottom: 0; font-weight: bold; }
.handle { width: 28px; height: 22px; flex: none; background: repeating-linear-gradient(#dcdcdc 0 3px, #eee 3px 7px); }
.stencil-name { flex: 1; margin-left: 18px; }
.rm { width: 18px; height: 18px; flex: none; margin-top: -3px; }
.stencil-active .rm { margin-top: -7px; }
.shapes { display: block; width: 310px; height: 150px; margin: 39px 0 0 34px; }
.side-scroll { width: 20px; flex: none; display: flex; flex-direction: column; align-items: center; }
.arrow-up, .arrow-down { width: 0; height: 0; border: 5px solid transparent; flex: none; }
.arrow-up { border-bottom: 6px solid #444; border-top: 0; margin-top: 8px; }
.arrow-down { border-top: 6px solid #444; border-bottom: 0; margin-bottom: 12px; }
.side-track { flex: 1; width: 100%; padding-top: 112px; }
.side-thumb { width: 18px; height: 238px; background: #c1c1c1; }
.more { height: 52px; flex: none; display: flex; align-items: stretch; margin-left: 2px; background: #16345f; color: #fff; border-top: 2px solid #52698c; }
.more-label { width: 278px; padding-left: 28px; font-size: 25px; line-height: 48px; flex: none; }
.more-btn { width: 60px; flex: none; border-left: 2px solid #3c5680; display: flex; align-items: center; justify-content: center; }
.more-btn svg { height: 44px; width: 30px; }
.more-btn + .more-btn svg { height: 24px; width: 18px; margin-top: -4px; }

.canvas { flex: 1; min-width: 0; display: flex; flex-direction: column; margin: 7px 0 0 3px; background: #fff; border-radius: 6px 0 0 0; }
.doc-title { height: 95px; flex: none; margin: 0; padding: 17px 0 0 26px; font-size: 35px; line-height: 50px; font-weight: bold; color: #000; }
.grid {
  flex: 1; min-height: 0; position: relative; overflow: hidden; background-color: #fff;
  background-image:
    linear-gradient(#eeeefd 2px, transparent 2px), linear-gradient(90deg, #eeeefd 2px, transparent 2px),
    linear-gradient(#f8f8fe 2px, transparent 2px), linear-gradient(90deg, #f8f8fe 2px, transparent 2px);
  background-size: 25px 25px, 25px 25px, 12.500px 12.500px, 12.500px 12.500px;
  background-position: 0 0, 1px 0, 0 0, 1px 0;
}
.diagram { position: absolute; inset: 0; width: 100%; height: 100%; }
.wire { fill: none; stroke: #444; stroke-width: 2; }
.thick { stroke-width: 2.500; }
.grey { stroke: #777; }
.node { fill: #fff; stroke: #333; stroke-width: 3; }
.frame { fill: #fff; stroke: #333; stroke-width: 3; }
.diamond { fill: #fff; stroke: #333; stroke-width: 2.500; }
.label { font: 15.500px "Liberation Sans", sans-serif; fill: #111; }
.hscroll { height: 17px; flex: none; display: flex; align-items: center; background: #f1f1f1; }
.arrow-left, .arrow-right { width: 0; height: 0; border: 5px solid transparent; flex: none; }
.arrow-left { border-right: 6px solid #555; border-left: 0; margin-left: 7px; }
.arrow-right { border-left: 6px solid #444; border-right: 0; margin-left: auto; margin-right: 7px; }
.hthumb { width: 366px; height: 17px; margin-left: 9px; flex: none; background: #c1c1c1; }

.pagescroll { width: 21px; flex: none; background: #f1f1f1; display: flex; flex-direction: column; align-items: center; }
.page-thumb { width: 16px; height: 912px; margin-top: 7px; margin-bottom: auto; background: #c1c1c1; }

/* Taskbar */
.taskbar { height: 52px; flex: none; display: flex; align-items: center; background: #020305; color: #ddd; position: relative; padding-left: 1px; }
.task { width: 59.600px; height: 52px; flex: none; display: flex; align-items: center; justify-content: center; border-bottom: 3px solid transparent; }
.task:nth-child(-n+7) { width: 61.500px; }
.task svg { width: 30px; height: 32px; }
.task:nth-child(-n+3) svg { width: 24px; height: 24px; }
.task:nth-child(5), .task:nth-child(7), .task:nth-child(8), .task:nth-child(9), .task:nth-child(10), .task:nth-child(20) { border-bottom-color: #6db3ee; }
.task-on { background: #33363a; }
.task:nth-child(20) { background: none; }
.tray-help { width: 52px; flex: none; display: flex; justify-content: center; }
.tray-help svg { width: 34px; height: 40px; }
.tray { display: flex; align-items: center; flex: none; width: 592px; }
.tray svg { width: 31.200px; height: 26px; flex: none; }
.lang { width: 42px; text-align: center; font-size: 15px; flex: none; }
.clock { flex: none; margin-left: 11px; width: 84px; display: flex; flex-direction: column; align-items: center; font-size: 15px; line-height: 24px; }
.tk-l { font: bold 17px "Liberation Sans", sans-serif; fill: #fff; }
.tk-s { font: bold 22px "Liberation Sans", sans-serif; fill: #fff; }
.tk-e { font: bold 22px "Liberation Sans", sans-serif; fill: #2f8f3a; }
.tk-q { font: bold 22px "Liberation Sans", sans-serif; fill: #fff; }
.tk-i { font: bold 10px "Liberation Sans", sans-serif; fill: #fff; }
.tk-t { font: bold 12px "Liberation Sans", sans-serif; fill: #fff; }

.callouts { position: absolute; left: 0; top: 0; width: 600px; height: 900px; pointer-events: none; z-index: 5; }
```
